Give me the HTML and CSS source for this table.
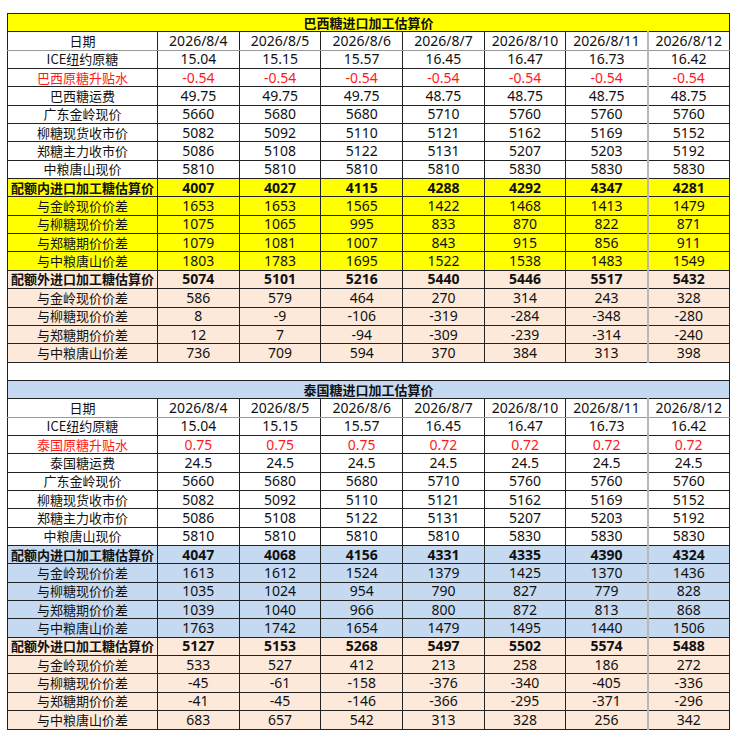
FILE: index.html
```html
<!DOCTYPE html>
<html lang="zh-CN">
<head>
<meta charset="utf-8">
<title>进口加工糖估算价</title>
<link rel="stylesheet" href="styles.css">
</head>
<body>
<table class="sheet">
<colgroup>
<col class="c-label">
<col class="c-num"><col class="c-num"><col class="c-num"><col class="c-num"><col class="c-num"><col class="c-num"><col class="c-num">
</colgroup>
<tbody>
<tr class="title yellow"><td colspan="8">巴西糖进口加工估算价</td></tr>
<tr class="head"><td class="lab">日期</td><td>2026/8/4</td><td>2026/8/5</td><td>2026/8/6</td><td>2026/8/7</td><td>2026/8/10</td><td>2026/8/11</td><td class="last">2026/8/12</td></tr>
<tr><td class="lab">ICE纽约原糖</td><td>15.04</td><td>15.15</td><td>15.57</td><td>16.45</td><td>16.47</td><td>16.73</td><td class="last">16.42</td></tr>
<tr class="red"><td class="lab">巴西原糖升贴水</td><td>-0.54</td><td>-0.54</td><td>-0.54</td><td>-0.54</td><td>-0.54</td><td>-0.54</td><td class="last">-0.54</td></tr>
<tr><td class="lab">巴西糖运费</td><td>49.75</td><td>49.75</td><td>49.75</td><td>48.75</td><td>48.75</td><td>48.75</td><td class="last">48.75</td></tr>
<tr><td class="lab">广东金岭现价</td><td>5660</td><td>5680</td><td>5680</td><td>5710</td><td>5760</td><td>5760</td><td class="last">5760</td></tr>
<tr><td class="lab">柳糖现货收市价</td><td>5082</td><td>5092</td><td>5110</td><td>5121</td><td>5162</td><td>5169</td><td class="last">5152</td></tr>
<tr><td class="lab">郑糖主力收市价</td><td>5086</td><td>5108</td><td>5122</td><td>5131</td><td>5207</td><td>5203</td><td class="last">5192</td></tr>
<tr><td class="lab">中粮唐山现价</td><td>5810</td><td>5810</td><td>5810</td><td>5810</td><td>5830</td><td>5830</td><td class="last">5830</td></tr>
<tr class="yellow bold"><td class="lab">配额内进口加工糖估算价</td><td>4007</td><td>4027</td><td>4115</td><td>4288</td><td>4292</td><td>4347</td><td class="last">4281</td></tr>
<tr class="yellow"><td class="lab">与金岭现价价差</td><td>1653</td><td>1653</td><td>1565</td><td>1422</td><td>1468</td><td>1413</td><td class="last">1479</td></tr>
<tr class="yellow"><td class="lab">与柳糖现价价差</td><td>1075</td><td>1065</td><td>995</td><td>833</td><td>870</td><td>822</td><td class="last">871</td></tr>
<tr class="yellow"><td class="lab">与郑糖期价价差</td><td>1079</td><td>1081</td><td>1007</td><td>843</td><td>915</td><td>856</td><td class="last">911</td></tr>
<tr class="yellow"><td class="lab">与中粮唐山价差</td><td>1803</td><td>1783</td><td>1695</td><td>1522</td><td>1538</td><td>1483</td><td class="last">1549</td></tr>
<tr class="peach bold"><td class="lab">配额外进口加工糖估算价</td><td>5074</td><td>5101</td><td>5216</td><td>5440</td><td>5446</td><td>5517</td><td class="last">5432</td></tr>
<tr class="peach"><td class="lab">与金岭现价价差</td><td>586</td><td>579</td><td>464</td><td>270</td><td>314</td><td>243</td><td class="last">328</td></tr>
<tr class="peach"><td class="lab">与柳糖现价价差</td><td>8</td><td>-9</td><td>-106</td><td>-319</td><td>-284</td><td>-348</td><td class="last">-280</td></tr>
<tr class="peach"><td class="lab">与郑糖期价价差</td><td>12</td><td>7</td><td>-94</td><td>-309</td><td>-239</td><td>-314</td><td class="last">-240</td></tr>
<tr class="peach"><td class="lab">与中粮唐山价差</td><td>736</td><td>709</td><td>594</td><td>370</td><td>384</td><td>313</td><td class="last">398</td></tr>
<tr class="blank"><td colspan="8">&nbsp;</td></tr>
<tr class="title blue"><td colspan="8">泰国糖进口加工估算价</td></tr>
<tr class="head"><td class="lab">日期</td><td>2026/8/4</td><td>2026/8/5</td><td>2026/8/6</td><td>2026/8/7</td><td>2026/8/10</td><td>2026/8/11</td><td class="last">2026/8/12</td></tr>
<tr><td class="lab">ICE纽约原糖</td><td>15.04</td><td>15.15</td><td>15.57</td><td>16.45</td><td>16.47</td><td>16.73</td><td class="last">16.42</td></tr>
<tr class="red"><td class="lab">泰国原糖升贴水</td><td>0.75</td><td>0.75</td><td>0.75</td><td>0.72</td><td>0.72</td><td>0.72</td><td class="last">0.72</td></tr>
<tr><td class="lab">泰国糖运费</td><td>24.5</td><td>24.5</td><td>24.5</td><td>24.5</td><td>24.5</td><td>24.5</td><td class="last">24.5</td></tr>
<tr><td class="lab">广东金岭现价</td><td>5660</td><td>5680</td><td>5680</td><td>5710</td><td>5760</td><td>5760</td><td class="last">5760</td></tr>
<tr><td class="lab">柳糖现货收市价</td><td>5082</td><td>5092</td><td>5110</td><td>5121</td><td>5162</td><td>5169</td><td class="last">5152</td></tr>
<tr><td class="lab">郑糖主力收市价</td><td>5086</td><td>5108</td><td>5122</td><td>5131</td><td>5207</td><td>5203</td><td class="last">5192</td></tr>
<tr><td class="lab">中粮唐山现价</td><td>5810</td><td>5810</td><td>5810</td><td>5810</td><td>5830</td><td>5830</td><td class="last">5830</td></tr>
<tr class="blue bold"><td class="lab">配额内进口加工糖估算价</td><td>4047</td><td>4068</td><td>4156</td><td>4331</td><td>4335</td><td>4390</td><td class="last">4324</td></tr>
<tr class="blue"><td class="lab">与金岭现价价差</td><td>1613</td><td>1612</td><td>1524</td><td>1379</td><td>1425</td><td>1370</td><td class="last">1436</td></tr>
<tr class="blue"><td class="lab">与柳糖现价价差</td><td>1035</td><td>1024</td><td>954</td><td>790</td><td>827</td><td>779</td><td class="last">828</td></tr>
<tr class="blue"><td class="lab">与郑糖期价价差</td><td>1039</td><td>1040</td><td>966</td><td>800</td><td>872</td><td>813</td><td class="last">868</td></tr>
<tr class="blue"><td class="lab">与中粮唐山价差</td><td>1763</td><td>1742</td><td>1654</td><td>1479</td><td>1495</td><td>1440</td><td class="last">1506</td></tr>
<tr class="peach bold"><td class="lab">配额外进口加工糖估算价</td><td>5127</td><td>5153</td><td>5268</td><td>5497</td><td>5502</td><td>5574</td><td class="last">5488</td></tr>
<tr class="peach"><td class="lab">与金岭现价价差</td><td>533</td><td>527</td><td>412</td><td>213</td><td>258</td><td>186</td><td class="last">272</td></tr>
<tr class="peach"><td class="lab">与柳糖现价价差</td><td>-45</td><td>-61</td><td>-158</td><td>-376</td><td>-340</td><td>-405</td><td class="last">-336</td></tr>
<tr class="peach"><td class="lab">与郑糖期价价差</td><td>-41</td><td>-45</td><td>-146</td><td>-366</td><td>-295</td><td>-371</td><td class="last">-296</td></tr>
<tr class="peach"><td class="lab">与中粮唐山价差</td><td>683</td><td>657</td><td>542</td><td>313</td><td>328</td><td>256</td><td class="last">342</td></tr>
</tbody>
</table>
</body>
</html>
```
FILE: styles.css
```css
html, body {
  margin: 0;
  padding: 0;
  background: #ffffff;
}
body {
  padding: 13px 0 0 7px;
  font-family: "Noto Sans", "Noto Sans CJK SC", sans-serif;
  color: #111;
}
.sheet {
  border-collapse: collapse;
  table-layout: fixed;
  width: 722px;
  height: 717px;
}
.c-label { width: 150px; }
.c-num { width: 81.7px; }
.sheet td {
  border: 1px solid #222;
  padding: 0;
  text-align: center;
  vertical-align: middle;
  font-size: 14px;
  line-height: 12px;
  white-space: nowrap;
  overflow: hidden;
}
.sheet td.lab {
  font-family: "Noto Sans CJK SC", sans-serif;
  font-size: 13px;
}
.sheet td.last {
  border-left: 2px solid #b8b8b8;
}
.head td {
  border-bottom-color: #9a9a9a;
}
.title td {
  font-family: "Noto Sans CJK SC", sans-serif;
  font-size: 13px;
  font-weight: bold;
}
.bold td {
  font-weight: bold;
}
.red td {
  color: #ff1a1a;
}
.yellow td {
  background: #ffff00;
}
.blue td {
  background: #c5d9f1;
}
.peach td {
  background: #fde9d9;
}
.blank td {
  background: #ffffff;
}
```
